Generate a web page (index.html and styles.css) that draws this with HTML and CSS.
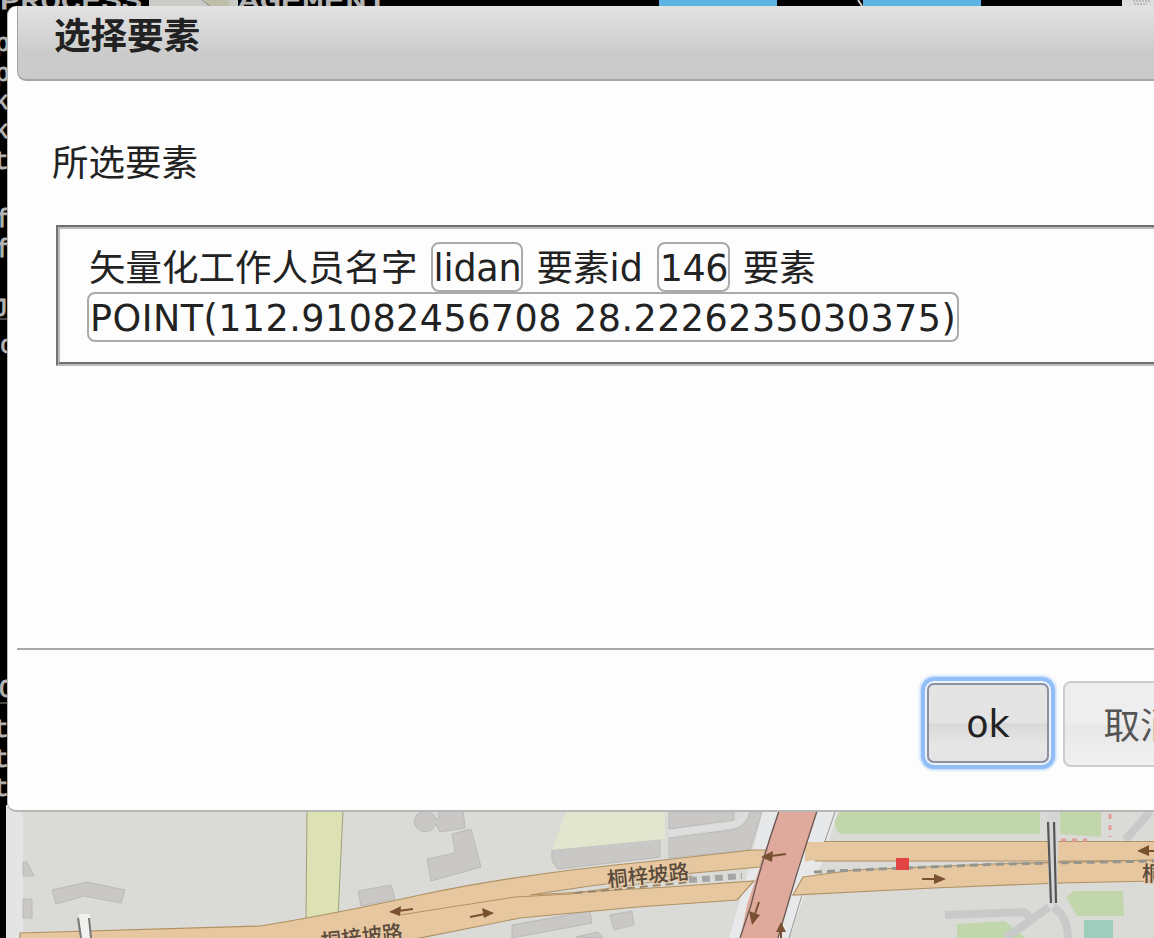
FILE: index.html
```html
<!DOCTYPE html>
<html lang="zh-CN">
<head>
<meta charset="utf-8">
<title>选择要素</title>
<link rel="stylesheet" href="styles.css">
</head>
<body>
<main class="screen">
<svg class="backdrop" width="1154" height="938" viewBox="0 0 1154 938" aria-hidden="true">
  <rect width="1154" height="938" fill="#000"/>
  <g class="terminal">
    <text x="0" y="9" textLength="142" lengthAdjust="spacingAndGlyphs">PROCESS</text>
    <text x="-5" y="51">p</text><text x="-5" y="81">p</text><text x="-6" y="109">k</text><text x="-6" y="138">k</text><text x="-6" y="169">t</text>
    <text x="-4" y="227">f</text><text x="-4" y="257">f</text><text x="-7" y="316">J</text><path d="M0 319h7M0 703h7"/><text x="0" y="353">c</text>
    <text x="-1" y="697">O</text><text x="-6" y="737">t</text><text x="-6" y="767">t</text><text x="-6" y="796">t</text>
  </g>
  <path d="M149 0h89v6h-89z" fill="#cacac7"/><path d="M205 0h24v6h-21z" fill="#bdbda8"/><path d="M202 0l8 6" stroke="#888"/>
  <text class="terminal" x="238" y="9" textLength="150" lengthAdjust="spacingAndGlyphs">AGEMENT</text>
  <path d="M659 0h118v6H659zM863 0h118v6H863z" fill="#5db3e1"/><path d="M858 0l4 6" stroke="#ccc" stroke-width="2"/>
  <path d="M1122 0h32v6h-32z" fill="#ddd"/><path d="M1133 1h18M1134 4h13" stroke="#999" stroke-dasharray="2 1"/>
  <path d="M6 805h18v133H6z" fill="#e4e4e4"/><path d="M23 805h1131v133H23z" fill="#dadad6"/>

  <g class="building">
    <path d="M23 862h4l7 14H23zM23 899h9v19h-9zM52 890l35-8 38 8-4 13-37-7-28 8zM358 891l33-6 4 14-34 7z"/>
    <path d="M438 810h25l2 18-25 4-4-8a11 10 0 1 1 0-5l3-1zM452 834l19-5 10 38-50 14-4-22 28-6zM552 850l108-11v18l-102 12-6-8z"/>
    <path d="M669 812h65v8l-65 9zM669 838l62-8q16-3 19-18h12l-12 38-81 8zM512 925l78-14 2 12-80 15zM610 915l22-4 2 14-20 5zM576 937l22-5 5 6z"/>
  </g>
  <path d="M669 833l62-8q12-2 14-13" fill="none" stroke="#dedede" stroke-width="5"/>
  <path d="M566 812h99v27l-113 11z" fill="#e3e6cf"/>
  <path d="M840 812h200v22H840q-10-10 0-22zM1060 812h41v25l-41-3zM1066 897l8-6h49l1 25h-47zM957 924l48-3 20 17h-68z" fill="#c2d6ac"/>
  <path d="M1084 920h29v18h-29z" fill="#9ecdbd"/>
  <g fill="none" stroke="#c9c9ca" stroke-width="8"><path d="M945 915l79-3 8 7M1006 938l43-31M1053 907q14 8 15 31M1150 812l-25 28"/></g>

  <path d="M307 810h36l-5 108-32 1z" fill="#dde2b5" stroke="#a1a178"/>
  <path d="M763 810h75l-17 56-15 25-17 47h-60l17-58z" fill="#e7e8e9"/><path d="M835 812l-10 29M802 895l-13 43" stroke="#999"/>
  <g fill="#e7c7a0" stroke="#b09165" stroke-width="1.2">
    <path d="M20 933q120-4 240-7c50-8 110-20 160-31 70-15 160-27 235-34l97-11h14l-6 17-66 6-104 13-60 9 53-3 85-5 86-6-17 19-100 7-117 11-120 24-60 10H20z"/>
    <path d="M814 842h345v19H815l-6-1z" stroke="none"/><path d="M824 841.500h335M815 861h344" fill="none"/>
    <path d="M803 877l51-7 140-6 161-4v21l-95 2-127 5-140 7z"/>
  </g>
  <path d="M805 842h20v18h-14l-6 2z" fill="#e7c7a0"/>
  <path d="M400 915l115-18 55-3 122-18" fill="none" stroke="#b9905f"/>
  <path d="M575 893l45-4 70-7" fill="none" stroke="#958567" stroke-width="2" stroke-dasharray="8 5"/>
  <path d="M689 880l53-4" stroke="#a5a5a5" stroke-width="6" stroke-dasharray="8 5"/>
  <path d="M814 872l90-4 100-4 150-3" fill="none" stroke="#96968e" stroke-width="3" stroke-dasharray="8 5"/>
  <path d="M779 810h39l-21 60-19 70h-38l7-35z" fill="#dfa99b"/><path d="M779 811q-17 49-28 94l-11 33M817 811l-20 62-19 65" fill="none" stroke="#685653" stroke-width="1.3"/>
  <path d="M1047 812h12l-2 92h-8z" fill="#d4d5d5"/><path d="M1048 822l3 81M1054 822l2 81" stroke="#555" stroke-width="2.200"/>
  <path d="M79 914h11l1 24H81z" fill="#f1f1ef"/><path d="M78 918l3 20M89 918l2 20" stroke="#777" stroke-width="2"/>
  <path d="M1110 814v23M1061 840h26" fill="none" stroke="#e29d99" stroke-width="3" stroke-dasharray="5 6"/>
  <g class="arrows">
    <path d="M413 909l-15 2M470 917l15-3M786 854l-15 2M759 902l-5 15M781 938v-9M922 879h15M1154 851h-11"/>
    <path class="head" d="M389 912l12-6-1 10zM494 913l-12-5 2 10zM761 857l12-6-1 11zM752 925l-3-14 11 4zM781 922l5 10h-10zM946 879l-12-5v10zM1137 851l12-6v11z"/>
  </g>
  <path d="M896 858h13v12h-13z" fill="#e44344"/>
  <text class="road-label" transform="translate(608 887) rotate(-6)" textLength="82">桐梓坡路</text>
  <text class="road-label" transform="translate(322 949) rotate(-7)" textLength="82">桐梓坡路</text>
  <text class="road-label" x="1142" y="881">桐</text>
</svg>
<section class="dialog" role="dialog" aria-labelledby="dialog-title">
  <header class="titlebar" id="dialog-title">选择要素</header>
  <div class="content">
    <p class="caption">所选要素</p>
    <div class="feature"><div class="feature-inner">
      <div class="row"><span class="words">矢量化工作人员名字</span><span class="value name">lidan</span><span class="words">要素id</span><span class="value number">146</span><span class="words">要素</span></div>
      <div class="row"><span class="value point">POINT(112.91082456708 28.2226235030375)</span></div>
    </div></div>
  </div>
  <footer class="buttons"><button class="button focused">ok</button><button class="button cancel">取消</button></footer>
</section>
</main>
</body>
</html>
```
FILE: styles.css
```css
* { box-sizing: border-box; }
body { margin: 0; background: #000; }
.screen {
  position: relative; width: 1154px; height: 938px; overflow: hidden;
  font-family: "DejaVu Sans", "Noto Sans CJK SC", sans-serif;
  font-size: 36.5px; color: #222;
}
.backdrop { position: absolute; inset: 0; }
.terminal { font-family: "Liberation Mono", monospace; font-size: 25px; fill: #b5b5b5; stroke: #b5b5b5; stroke-width: 0.8; }
.building { fill: #cac8c6; stroke: #bcbab8; }
.arrows { fill: none; stroke: #795031; stroke-width: 2; }
.head { fill: #795031; stroke: none; }
.road-label { font-family: "Noto Sans CJK SC", sans-serif; font-size: 20.5px; font-weight: 500; fill: #5a4b3d; stroke: #e7c7a0; stroke-width: 2px; paint-order: stroke; }
.dialog {
  position: absolute; left: 7px; top: 6px; width: 1300px; height: 806px;
  background: #fdfdfd; border: solid #b7b7b7; border-width: 0 0 2px 1px;
  border-radius: 9px; padding-left: 9px; display: flex; flex-direction: column;
}
.titlebar {
  flex: none; height: 75px; padding-left: 36px; line-height: 61px; font-weight: 700;
  background: linear-gradient(#e2e2e2, #cbcbcb 65%, #cacaca);
  border: solid #a4a4a4; border-width: 0 0 2px 1px; border-bottom-left-radius: 9px;
}
.content { flex: 1; padding: 58px 0 0 35px; }
.caption { margin: 0; line-height: 50px; }
.feature { width: 1220px; height: 141px; margin: 36px 0 0 4px; border: 2px solid; border-color: #6d6e6d #bbb #bbb #737373; }
.feature-inner { height: 137px; padding: 13px 0 0 27px; border: 2px solid; border-color: #bbb #707070 #707070 #bbb; }
.row { display: flex; height: 50px; line-height: 50px; padding-left: 2px; white-space: nowrap; }
.words { line-height: 54px; }
.value { border: 2px solid #aaa; border-radius: 8px; height: 50px; line-height: 49px; padding-left: 1px; }
.name { width: 92px; margin: 0 14px 0 13px; letter-spacing: -0.2px; }
.number { width: 73px; margin: 0 13px 0 14px; letter-spacing: -0.5px; }
.point { width: 872px; margin-left: -2px; letter-spacing: 0.47px; }
.buttons { flex: none; height: 162px; border-top: 2px solid #a9a9a9; display: flex; align-items: flex-start; padding: 31px 0 0 904px; }
.button {
  font: inherit; color: #222; height: 86px; padding: 2px 0 0; border: 2px solid #ccc; border-radius: 8px;
  background: linear-gradient(#e5e4e4 0 49%, #d9d9d9 52%, #e7e6e6 78%, #e5e4e4);
}
.focused { width: 122px; height: 80px; margin: 2px 14px 0 6px; border-color: #8d919d; border-radius: 7px; box-shadow: 0 0 0 2px #edf3fa, 0 0 0 6px #91bef7, 0 0 3px 7px #b1d2fb; }
.cancel { width: 154px; padding-top: 0; padding-bottom: 2px; color: #555; background: linear-gradient(#eee 0 49%, #e8e8e8 53%, #f0f0f0); }
```
